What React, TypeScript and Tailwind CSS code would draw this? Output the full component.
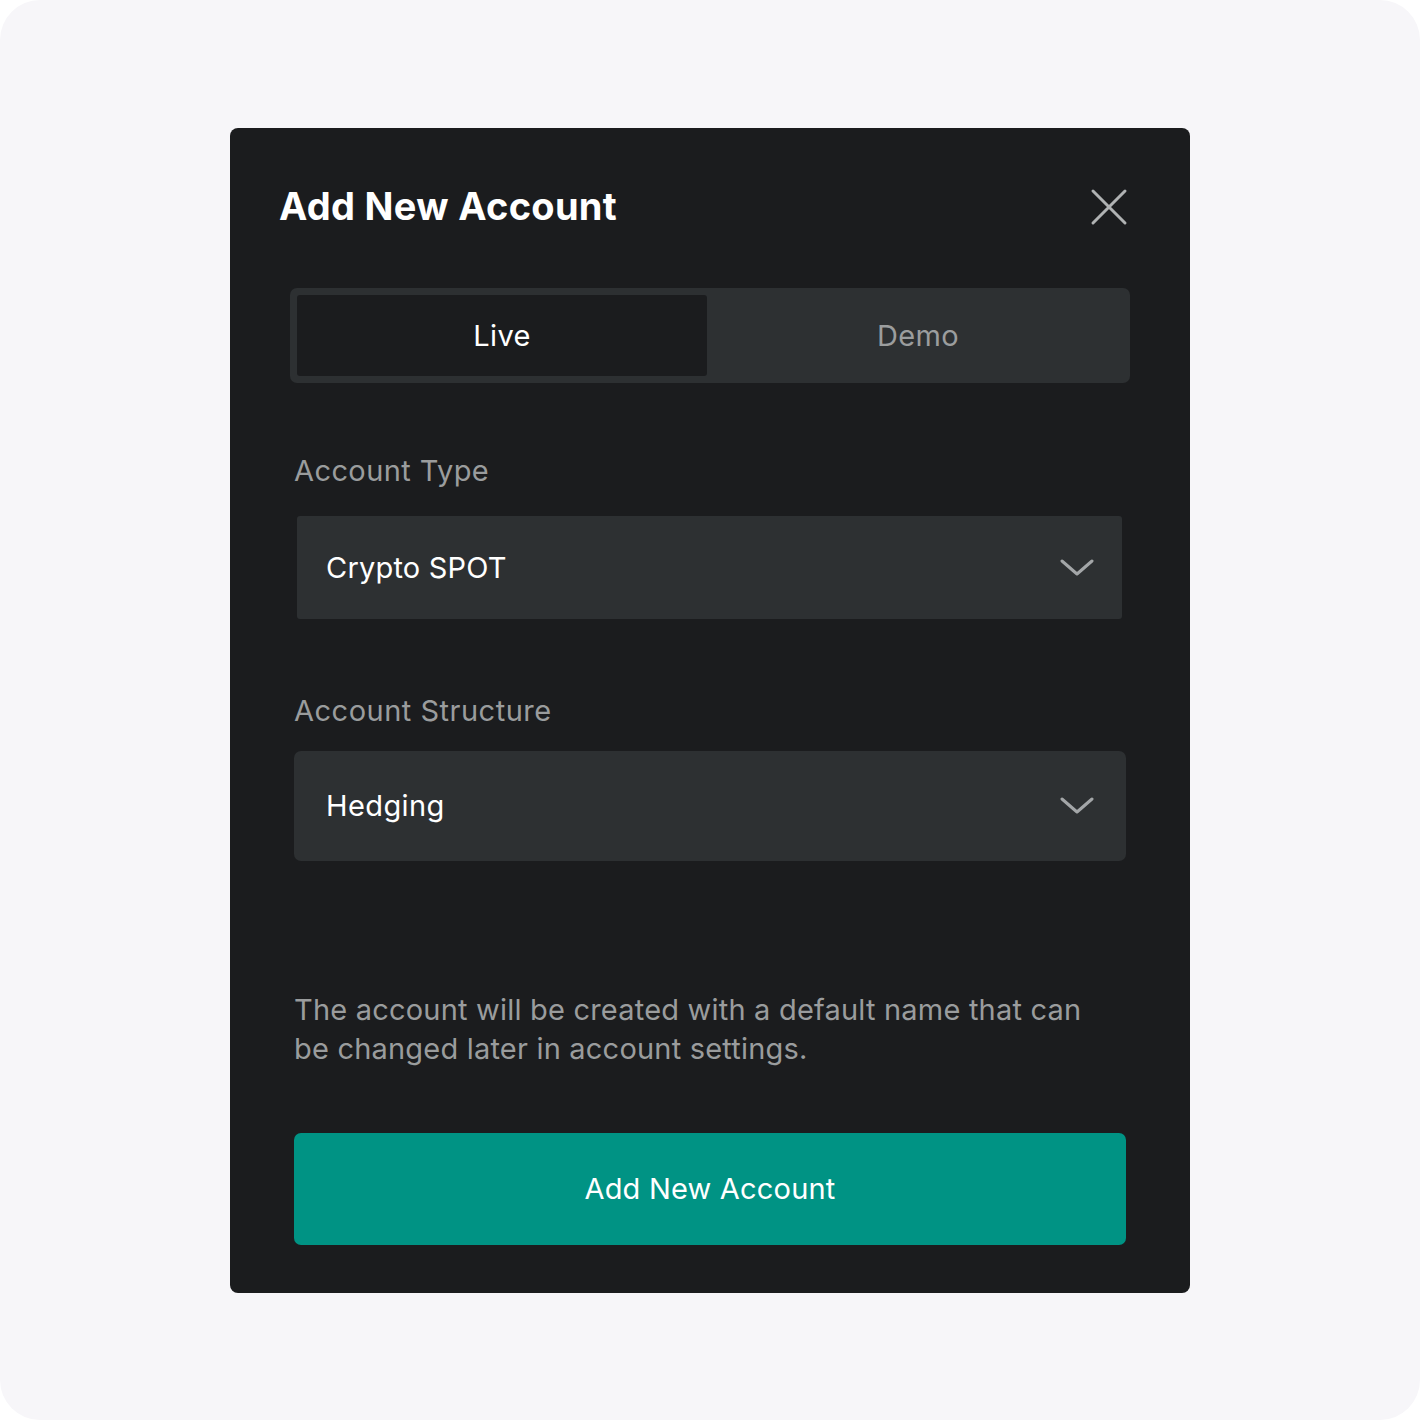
import React from "react";

function Chevron() {
  return (
    <svg width="34" height="20" viewBox="0 0 34 20" fill="none">
      <path d="M2 3 L17 16 L32 3" stroke="#a3a6a8" strokeWidth="3" strokeLinecap="round" strokeLinejoin="round" />
    </svg>
  );
}

export default function App() {
  return (
    <div className="w-[1420px] h-[1420px] bg-white" style={{ fontFamily: "Inter, 'Noto Sans', sans-serif" }}>
      <div className="w-full h-full bg-[#f7f6f9] rounded-[40px] flex justify-center pt-[128px]">
        <div className="w-[960px] h-[1165px] bg-[#1b1c1e] rounded-[8px] flex flex-col px-[49px] pt-[50px]">
          <div className="flex items-center justify-between pr-[13px]">
            <h1 className="text-[38px] leading-[56px] font-bold text-white tracking-[0.3px]">Add New Account</h1>
            <svg width="38" height="38" viewBox="0 0 38 38" fill="none" className="mt-[2px]">
              <path d="M3 3 L35 35 M35 3 L3 35" stroke="#b0b2b3" strokeWidth="3" strokeLinecap="round" />
            </svg>
          </div>

          <div className="mt-[54px] ml-[11px] w-[840px] h-[95px] bg-[#2d3032] rounded-[7px] p-[7px] flex">
            <div className="w-[410px] h-full bg-[#1b1c1e] rounded-[3px] flex items-center justify-center text-[29px] tracking-[0.3px] text-white">
              Live
            </div>
            <div className="flex-1 flex items-center justify-center pl-[6px] text-[29px] tracking-[0.3px] text-[#9b9d9e]">Demo</div>
          </div>

          <div className="ml-[15px] mt-[70px] text-[29px] leading-[36px] tracking-[0.4px] text-[#9a9c9d]">Account Type</div>
          <div className="ml-[18px] mt-[27px] w-[825px] h-[103px] bg-[#2d3032] rounded-[3px] flex items-center justify-between pl-[29px] pr-[28px]">
            <span className="text-[29px] tracking-[0.2px] text-white">Crypto SPOT</span>
            <Chevron />
          </div>

          <div className="ml-[15px] mt-[74px] text-[29px] leading-[36px] tracking-[0.5px] text-[#9a9c9d]">Account Structure</div>
          <div className="ml-[15px] mt-[22px] w-[832px] h-[110px] bg-[#2d3032] rounded-[7px] flex items-center justify-between pl-[32px] pr-[32px]">
            <span className="text-[29px] tracking-[0.4px] text-white">Hedging</span>
            <Chevron />
          </div>

          <p className="ml-[15px] mt-[129px] w-[810px] text-[29px] leading-[39px] tracking-[0.2px] text-[#9a9c9d]">
            The account will be created with a default name that can be changed later in account settings.
          </p>

          <button className="ml-[15px] mt-[65px] w-[832px] h-[112px] bg-[#009384] rounded-[7px] text-[29px] tracking-[0.2px] text-white flex items-center justify-center">
            Add New Account
          </button>
        </div>
      </div>
    </div>
  );
}
